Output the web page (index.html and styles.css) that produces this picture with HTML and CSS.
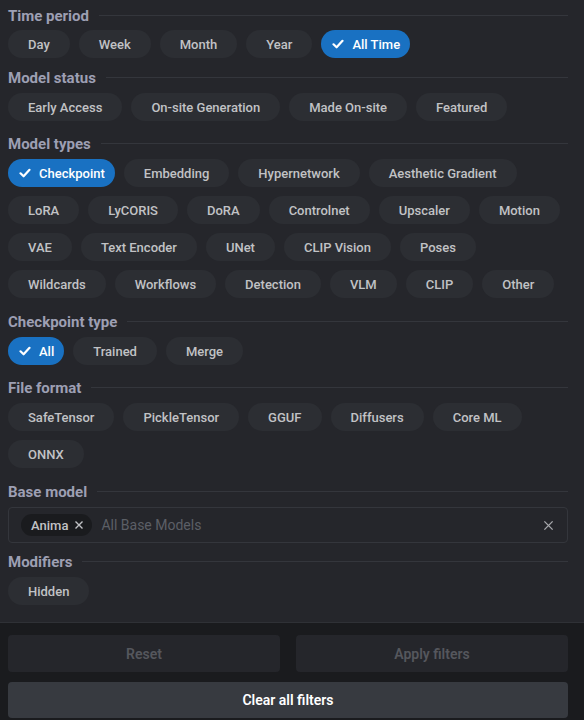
FILE: index.html
```html
<!DOCTYPE html>
<html lang="en">
<head>
<meta charset="utf-8">
<title>Filters</title>
<link rel="stylesheet" href="styles.css">
</head>
<body>
<div class="panel">
  <div class="scroll">
    <section class="section section--first">
      <div class="title"><span>Time period</span><i class="rule"></i></div>
      <div class="chips">
        <button class="chip">Day</button>
        <button class="chip">Week</button>
        <button class="chip">Month</button>
        <button class="chip">Year</button>
        <button class="chip chip--on"><svg class="check" viewBox="0 0 12 12"><polyline points="1.5,6.3 4.6,9.3 10.5,2.8"/></svg>All Time</button>
      </div>
    </section>
    <section class="section">
      <div class="title"><span>Model status</span><i class="rule"></i></div>
      <div class="chips">
        <button class="chip">Early Access</button>
        <button class="chip">On-site Generation</button>
        <button class="chip">Made On-site</button>
        <button class="chip">Featured</button>
      </div>
    </section>
    <section class="section section--wide">
      <div class="title"><span>Model types</span><i class="rule"></i></div>
      <div class="chips">
        <button class="chip chip--on"><svg class="check" viewBox="0 0 12 12"><polyline points="1.5,6.3 4.6,9.3 10.5,2.8"/></svg>Checkpoint</button>
        <button class="chip">Embedding</button>
        <button class="chip">Hypernetwork</button>
        <button class="chip">Aesthetic Gradient</button>
        <button class="chip">LoRA</button>
        <button class="chip">LyCORIS</button>
        <button class="chip">DoRA</button>
        <button class="chip">Controlnet</button>
        <button class="chip">Upscaler</button>
        <button class="chip">Motion</button>
        <button class="chip">VAE</button>
        <button class="chip">Text Encoder</button>
        <button class="chip">UNet</button>
        <button class="chip">CLIP Vision</button>
        <button class="chip">Poses</button>
        <button class="chip">Wildcards</button>
        <button class="chip">Workflows</button>
        <button class="chip">Detection</button>
        <button class="chip">VLM</button>
        <button class="chip">CLIP</button>
        <button class="chip">Other</button>
      </div>
    </section>
    <section class="section">
      <div class="title"><span>Checkpoint type</span><i class="rule"></i></div>
      <div class="chips">
        <button class="chip chip--on"><svg class="check" viewBox="0 0 12 12"><polyline points="1.5,6.3 4.6,9.3 10.5,2.8"/></svg>All</button>
        <button class="chip">Trained</button>
        <button class="chip">Merge</button>
      </div>
    </section>
    <section class="section section--wide">
      <div class="title"><span>File format</span><i class="rule"></i></div>
      <div class="chips">
        <button class="chip">SafeTensor</button>
        <button class="chip">PickleTensor</button>
        <button class="chip">GGUF</button>
        <button class="chip">Diffusers</button>
        <button class="chip">Core ML</button>
        <button class="chip">ONNX</button>
      </div>
    </section>
    <section class="section section--tight">
      <div class="title"><span>Base model</span><i class="rule"></i></div>
      <div class="select">
        <span class="pill">Anima<svg class="pill-x" viewBox="0 0 10 10"><path d="M1.5 1.5l7 7M8.5 1.5l-7 7"/></svg></span>
        <span class="placeholder">All Base Models</span>
        <svg class="clear" viewBox="0 0 12 12"><path d="M1.5 1.5l9 9M10.5 1.5l-9 9"/></svg>
      </div>
    </section>
    <section class="section">
      <div class="title"><span>Modifiers</span><i class="rule"></i></div>
      <div class="chips">
        <button class="chip">Hidden</button>
      </div>
    </section>
  </div>
  <footer class="footer">
    <div class="footer-row">
      <button class="btn btn--disabled">Reset</button>
      <button class="btn btn--disabled">Apply filters</button>
    </div>
    <button class="btn btn--clear">Clear all filters</button>
  </footer>
</div>
</body>
</html>
```
FILE: styles.css
```css
* { box-sizing: border-box; }
html, body { margin: 0; padding: 0; }
body {
  background: #25262b;
  font-family: Roboto, "Noto Sans", sans-serif;
  color: #c1c2c5;
}
.panel {
  width: 584px;
  height: 720px;
  display: flex;
  flex-direction: column;
}
.scroll {
  flex: 1;
  overflow: hidden;
  padding: 5px 16px 0 8px;
}
.section { margin-bottom: 12px; }
.section--first { margin-bottom: 9px; }
.section--first .title { margin-bottom: 5px; }
.section--wide { margin-bottom: 13px; }
.section--tight { margin-bottom: 8px; }
.title {
  height: 20px;
  display: flex;
  align-items: center;
  gap: 10px;
  margin-bottom: 6px;
}
.title span {
  font-size: 15px;
  font-weight: 700;
  color: #9d9fb3;
  white-space: nowrap;
  padding-top: 2px;
}
.rule {
  flex: 1;
  height: 1px;
  background: #34363c;
}
.chips {
  display: flex;
  flex-wrap: wrap;
  gap: 9px;
}
.chip {
  height: 28px;
  padding: 0 20px;
  border: 0;
  border-radius: 14px;
  background: #2c2e33;
  color: #c1c2c5;
  font-family: Roboto, "Noto Sans", sans-serif;
  font-size: 13px;
  font-weight: 500;
  display: inline-flex;
  align-items: center;
  white-space: nowrap;
}
.chip--on {
  background: #1971c2;
  color: #fff;
  padding: 0 10px;
}
.check {
  width: 12px;
  height: 12px;
  margin: 0 8px 0 1px;
  fill: none;
  stroke: #fff;
  stroke-width: 2.2;
  stroke-linecap: round;
  stroke-linejoin: round;
}
.select {
  height: 36px;
  border: 1px solid #34363c;
  border-radius: 4px;
  display: flex;
  align-items: center;
  padding: 0 12px;
  gap: 9px;
}
.pill {
  height: 22px;
  border-radius: 11px;
  background: #1a1b1e;
  color: #c1c2c5;
  font-size: 13px;
  font-weight: 500;
  display: inline-flex;
  align-items: center;
  padding: 0 8px 0 10px;
  gap: 6px;
}
.pill-x {
  width: 10px;
  height: 10px;
  fill: none;
  stroke: #c1c2c5;
  stroke-width: 1.4;
}
.placeholder {
  flex: 1;
  font-size: 14px;
  color: #5c5f66;
}
.clear {
  width: 11px;
  height: 11px;
  margin-right: 1px;
  fill: none;
  stroke: #a6a7ab;
  stroke-width: 1.5;
}
.footer {
  height: 98px;
  flex: none;
  background: #1a1b1e;
  border-top: 1px solid #2f3136;
  padding: 12px 16px 2px 8px;
  display: flex;
  flex-direction: column;
  gap: 10px;
}
.footer-row {
  display: flex;
  gap: 16px;
}
.btn {
  border: 0;
  border-radius: 4px;
  font-family: Roboto, "Noto Sans", sans-serif;
  font-size: 14px;
  font-weight: 600;
  display: flex;
  align-items: center;
  justify-content: center;
}
.btn--disabled {
  flex: 1;
  height: 37px;
  background: #25262b;
  color: #55575d;
}
.btn--clear {
  height: 36px;
  background: #373a40;
  color: #ffffff;
}
```
